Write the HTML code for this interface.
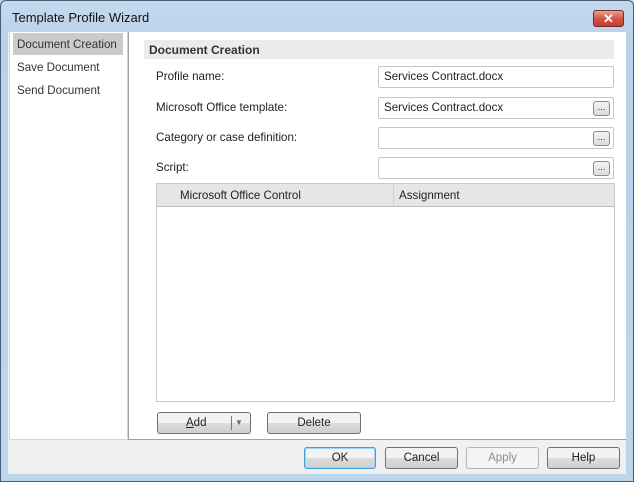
<!DOCTYPE html>
<html><head><style>
*{margin:0;padding:0;box-sizing:border-box}
body{width:634px;height:482px;overflow:hidden;background:#bcd4ea;font-family:"Liberation Sans",sans-serif;font-size:12px;color:#222;position:relative}
.a{position:absolute}
.frame{left:0;top:0;width:634px;height:482px;border:1px solid #4a5d73;border-radius:6px 6px 0 0;background:linear-gradient(#c4d9ee,#b9d1ea 40px,#bdd5ec);}
.title{left:12px;top:10px;font-size:13px;color:#111}
.close{left:593px;top:10px;width:31px;height:17px;border:1px solid #7a2a22;border-radius:3px;background:linear-gradient(#e8a193,#d2574a 50%,#c23d2f);color:#fff;font-weight:bold;font-size:13px;text-align:center;line-height:15px}
.client{left:8px;top:32px;width:618px;height:442px;background:#f0f0f0}
.nav{left:9px;top:32px;width:119px;height:408px;background:#fff;border:1px solid #d5d5d5;border-top:none}
.main{left:128px;top:32px;width:498px;height:408px;background:#fff;border-left:1px solid #a0a0a0;border-bottom:1px solid #a0a0a0}
.sel{left:13px;top:33px;width:110px;height:22px;background:#cbcbcb}
.nt{left:17px;font-size:11.6px;color:#333}
.sec{left:144px;top:40px;width:470px;height:19px;background:#ebebeb;font-weight:bold;padding:3px 5px;font-size:12px;color:#333}
.lbl{left:156px;font-size:11.6px}
.inp{left:378px;width:236px;height:22px;border:1px solid #c6c6c6;border-radius:2px;background:#fff;padding:3px 5px;font-size:11.6px}
.dots{right:3px;top:3px;width:17px;height:15px;border:1px solid #8a8a8a;border-radius:3px;background:linear-gradient(#f4f4f4,#dcdcdc);font-size:9px;text-align:center;line-height:10px}
.tbl{left:156px;top:183px;width:459px;height:219px;border:1px solid #c8c8c8;background:#fff}
.th{left:0;top:0;width:457px;height:23px;background:#e6e6e6;border-bottom:1px solid #bdbdbd}
.btn{height:22px;border:1px solid #707070;border-radius:3px;background:linear-gradient(#f2f2f2 50%,#dddddd 50%,#cfcfcf);text-align:center;font-size:11.5px;line-height:20px}
</style></head><body>
<div class="a frame"></div>
<div class="a title">Template Profile Wizard</div>
<div class="a close">✕</div>
<div class="a client"></div>
<div class="a nav"></div>
<div class="a sel"></div>
<div class="a nt" style="top:38px">Document Creation</div>
<div class="a nt" style="top:61px">Save Document</div>
<div class="a nt" style="top:84px">Send Document</div>
<div class="a main"></div>
<div class="a sec">Document Creation</div>
<div class="a lbl" style="top:70px">Profile name:</div>
<div class="a lbl" style="top:101px">Microsoft Office template:</div>
<div class="a lbl" style="top:131px">Category or case definition:</div>
<div class="a lbl" style="top:161px">Script:</div>
<div class="a inp" style="top:66px">Services Contract.docx</div>
<div class="a inp" style="top:97px">Services Contract.docx<div class="a dots">...</div></div>
<div class="a inp" style="top:127px"><div class="a dots">...</div></div>
<div class="a inp" style="top:157px"><div class="a dots">...</div></div>
<div class="a tbl"><div class="a th">
<div class="a" style="left:23px;top:5px;font-size:11.6px">Microsoft Office Control</div>
<div class="a" style="left:236px;top:0;width:1px;height:22px;background:#d0d0d0"></div>
<div class="a" style="left:242px;top:5px;font-size:11.6px">Assignment</div>
</div></div>
<div class="a btn" style="left:157px;top:412px;width:94px"><span style="position:absolute;left:28px"><u>A</u>dd</span><span style="position:absolute;left:73px;top:3px;width:1px;height:14px;background:#777"></span><span style="position:absolute;left:77px;top:0;font-size:8px;color:#666">▼</span></div>
<div class="a btn" style="left:267px;top:412px;width:94px">Delete</div>
<div class="a btn" style="left:304px;top:447px;width:72px;border-color:#3c9fd8;box-shadow:inset 0 0 0 1px #9fd6f5">OK</div>
<div class="a btn" style="left:385px;top:447px;width:73px">Cancel</div>
<div class="a btn" style="left:466px;top:447px;width:73px;border-color:#b5b5b5;background:#f4f4f4;color:#8d8d8d">Apply</div>
<div class="a btn" style="left:547px;top:447px;width:73px">Help</div>
</body></html>
